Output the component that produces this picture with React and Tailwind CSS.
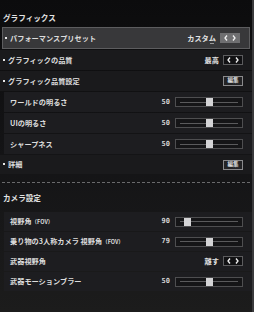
import React from 'react';

const JP = { fontFamily: '"Noto Sans CJK JP", "Noto Sans", sans-serif' };
const MONO = { fontFamily: '"DejaVu Sans Mono", "Liberation Mono", monospace' };

function Arrows({ active }) {
  return (
    <div
      className={`flex items-center justify-center gap-[4px] w-[20px] h-[10px] ${
        active ? 'bg-[#6f6f71]' : 'bg-[#111113] border border-[#5c5c5e]'
      }`}
    >
      <svg width="4" height="6" viewBox="0 0 4 6">
        <path d="M3 0.5L1 3l2 2.5" fill="none" stroke="#f2f2f2" strokeWidth="1.3" />
      </svg>
      <svg width="4" height="6" viewBox="0 0 4 6">
        <path d="M1 0.5L3 3l-2 2.5" fill="none" stroke="#f2f2f2" strokeWidth="1.3" />
      </svg>
    </div>
  );
}

function EditButton() {
  return (
    <div className="flex items-center justify-center w-[20px] h-[10px] bg-[#232325] border border-[#8a8a8c] text-[5.5px] leading-none text-[#e4e4e4] font-bold">
      編集
    </div>
  );
}

function Slider({ value, pos }) {
  return (
    <div className="flex items-center">
      <span className="w-[14px] text-right text-[7px] font-bold text-[#d6d6d6] mr-[5px]" style={MONO}>
        {value}
      </span>
      <div className="relative w-[68px] h-[10px] border border-[#4e4e50] bg-[#151517] flex items-center px-[4px]">
        <div className="h-px w-full bg-[#5a5a5c]" />
        <div
          className="absolute top-[0px] w-[7px] h-[8px] bg-[#d4d4d6]"
          style={{ left: pos }}
        />
      </div>
    </div>
  );
}

function Row({ label, bullet, sub, children, hl, tight }) {
  const h = tight ? 'h-[19px]' : 'h-[20px]';
  return (
    <div
      className={`flex items-center justify-between pr-[9px] ${
        hl
          ? 'h-[22px] mx-[2px] bg-[#38383a] border border-[#5d5d5f] pl-[2px] pr-[7px]'
          : sub
          ? `${h} ml-[4px] bg-[#1d1d20] pl-[6px]`
          : `${h} bg-[#1a1a1c] pl-[3px]`
      }`}
    >
      <div className="flex items-center text-[7.2px] font-bold text-[#dcdcdc]" style={JP}>
        {bullet && <span className="w-[2px] h-[2px] bg-[#e8e8e8] mr-[3px]" />}
        <span>{label}</span>
      </div>
      <div className="flex items-center">{children}</div>
    </div>
  );
}

function Value({ text, under }) {
  return (
    <span className="relative text-[7.2px] font-bold text-[#e2e2e2] mr-[4px]" style={JP}>
      {text}
      {under && <span className="absolute right-[2px] bottom-[-1px] w-[4px] h-px bg-[#9a9a9a]" />}
    </span>
  );
}

export default function App() {
  return (
    <div
      className="w-[254px] h-[312px] overflow-hidden border-r-[2px] border-[#3a3a3c] bg-gradient-to-b from-[#0c0c0d] via-[#141416] to-[#1c1c1c]"
      style={JP}
    >
      <div className="h-[27px] flex items-end pb-[4px] pl-[3px] text-[7.6px] font-bold text-[#e4e4e4]">
        グラフィックス
      </div>

      <div className="flex flex-col gap-px">
        <Row label="パフォーマンスプリセット" bullet hl>
          <Value text="カスタム" under />
          <Arrows active />
        </Row>
        <Row label="グラフィックの品質" bullet>
          <Value text="最高" />
          <Arrows />
        </Row>
        <Row label="グラフィック品質設定" bullet>
          <EditButton />
        </Row>
        <Row label="ワールドの明るさ" sub>
          <Slider value="50" pos={30} />
        </Row>
        <Row label="UIの明るさ" sub>
          <Slider value="50" pos={30} />
        </Row>
        <Row label="シャープネス" sub>
          <Slider value="50" pos={30} />
        </Row>
        <Row label="詳細" bullet tight>
          <EditButton />
        </Row>
      </div>

      <div className="mt-[8px] mx-[2px] border-t border-dashed border-[#6a6a6c]" />

      <div className="h-[29px] flex items-center pl-[3px] text-[7.6px] font-bold text-[#e4e4e4]">
        カメラ設定
      </div>

      <div className="flex flex-col gap-px">
        <Row label={<>視野角<span className="text-[5.5px]">（FOV）</span></>} sub tight>
          <Slider value="90" pos={8} />
        </Row>
        <Row label={<>乗り物の3人称カメラ 視野角<span className="text-[5.5px]">（FOV）</span></>} sub tight>
          <Slider value="79" pos={30} />
        </Row>
        <Row label="武器視野角" sub tight>
          <Value text="離す" />
          <Arrows />
        </Row>
        <Row label="武器モーションブラー" sub tight>
          <Slider value="50" pos={30} />
        </Row>
      </div>
    </div>
  );
}
